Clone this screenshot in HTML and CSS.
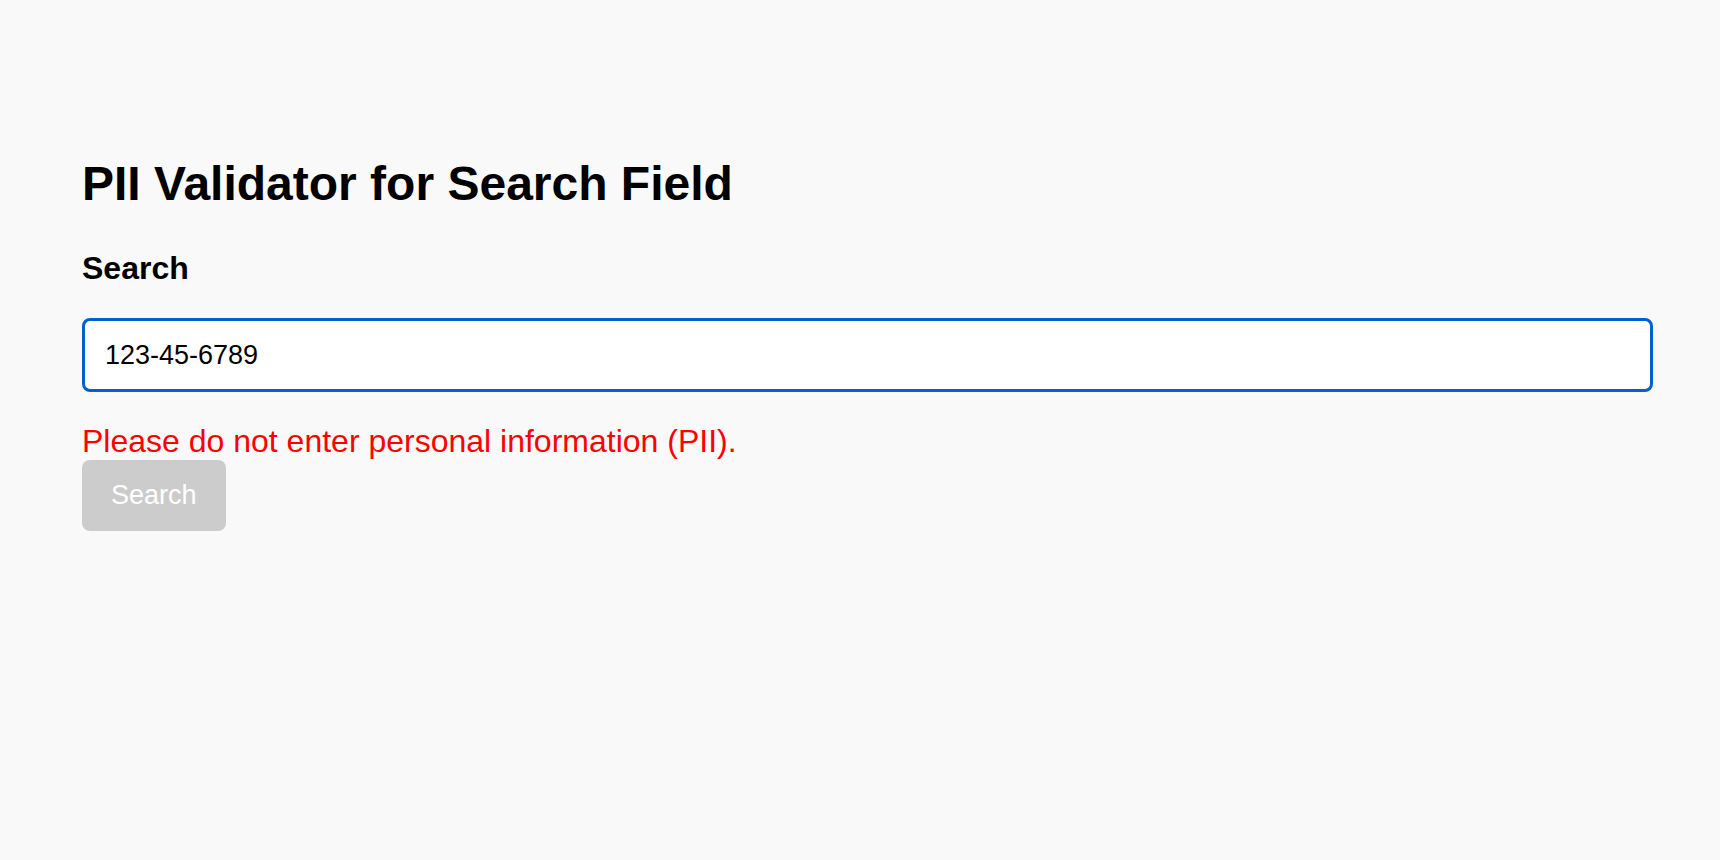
FILE: index.html
```html
<!DOCTYPE html>
<html lang="en">
<head>
<meta charset="utf-8">
<title>PII Validator for Search Field</title>
<link rel="stylesheet" href="styles.css">
</head>
<body>
<main class="page">
  <h1 class="title">PII Validator for Search Field</h1>
  <label class="field-label" for="search">Search</label>
  <input class="search-input" id="search" type="text" value="123-45-6789">
  <p class="error">Please do not enter personal information (PII).</p>
  <div class="actions">
    <button class="search-btn" type="button" disabled>Search</button>
  </div>
</main>
</body>
</html>
```

FILE: styles.css
```css
html, body {
  margin: 0;
  padding: 0;
  background: #f9f9f9;
}

body {
  font-family: "Liberation Sans", Arial, sans-serif;
  color: #000;
}

.page {
  display: flex;
  flex-direction: column;
  align-items: flex-start;
  padding: 156px 67px 0 82px;
}

.title {
  margin: 0;
  font-size: 48px;
  line-height: 55px;
  font-weight: bold;
}

.field-label {
  margin-top: 39px;
  font-size: 32px;
  line-height: 37px;
  font-weight: bold;
}

.search-input {
  box-sizing: border-box;
  margin-top: 31px;
  width: 100%;
  height: 74px;
  padding: 0 20px;
  border: 3px solid #0060cc;
  border-radius: 8px;
  background: #fff;
  outline: none;
  font-family: "Liberation Sans", Arial, sans-serif;
  font-size: 27px;
  color: #000;
}

.error {
  margin: 31px 0 0;
  font-size: 32px;
  line-height: 37px;
  color: #ff0000;
}

.actions {
  margin-top: 0;
}

.search-btn {
  padding: 20px 29px;
  border: none;
  border-radius: 8px;
  background: #cccccc;
  color: #ffffff;
  font-family: "Liberation Sans", Arial, sans-serif;
  font-size: 27px;
  line-height: 31px;
}
```
